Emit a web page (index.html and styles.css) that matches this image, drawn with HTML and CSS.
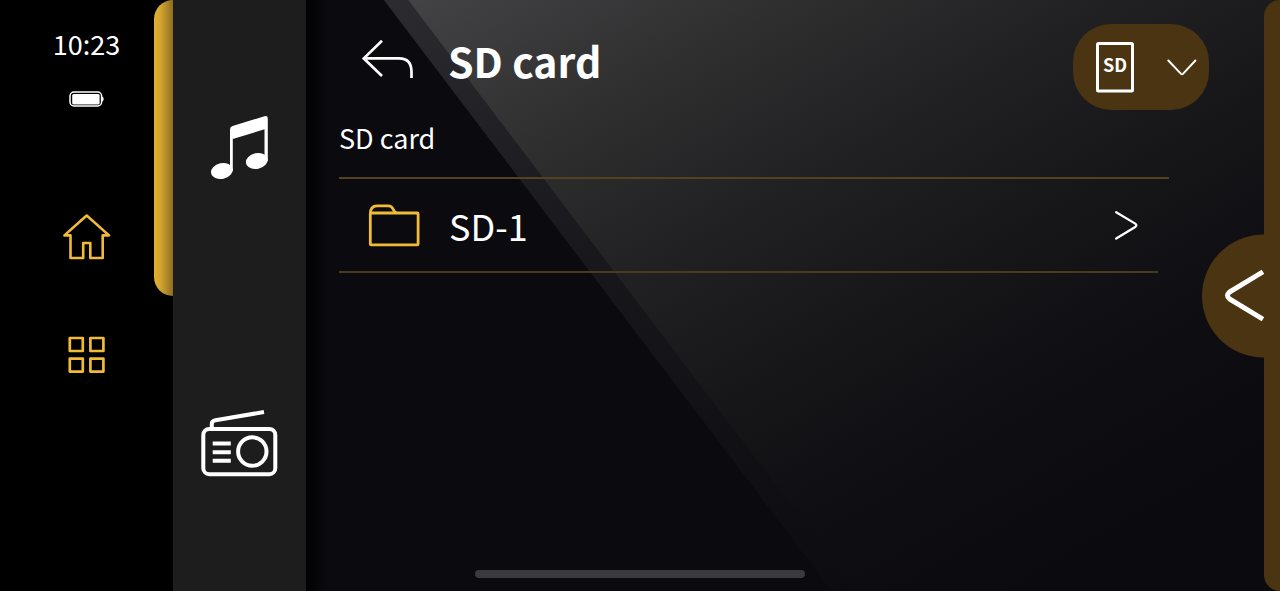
FILE: index.html
```html
<!DOCTYPE html>
<html lang="en">
<head>
  <meta charset="UTF-8" />
  <meta name="viewport" content="width=device-width, initial-scale=1.0" />
  <title>SD card</title>
  <link rel="stylesheet" href="styles.css">
</head>
<body>

  <!-- Status bar -->
  <aside class="status">
    <time class="time">10:23</time>
    <svg class="battery" width="36" height="18" viewBox="0 0 36 18" role="img" aria-label="Battery full">
      <rect x="1" y="2" width="31.6" height="14" rx="4" fill="none" stroke="#fff" stroke-width="1.5" />
      <rect x="3.2" y="4" width="27.4" height="10.4" rx="1.5" fill="#fff" />
      <path d="M33 6.5q1.7.2 1.7 2.5t-1.7 2.5z" fill="#fff" />
    </svg>
    <button class="icon-btn home" aria-label="Home">
      <svg width="50" height="48" viewBox="0 0 50 48" fill="none" stroke="#f1bb35" stroke-width="2.6" stroke-linejoin="round">
        <path d="M24.7 2.5 47 22.4H40.7V45H28.3V30H21.2V45H8.5V22.4H2.4Z" />
      </svg>
    </button>
    <button class="icon-btn apps" aria-label="Apps">
      <svg width="40" height="40" viewBox="0 0 40 40" fill="none" stroke="#f1bb35" stroke-width="2.7" stroke-linejoin="round">
        <rect x="2.8" y="3" width="13" height="13" />
        <rect x="23.4" y="3" width="13" height="13" />
        <rect x="2.8" y="23.6" width="13" height="13" />
        <rect x="23.4" y="23.6" width="13" height="13" />
      </svg>
    </button>
  </aside>

  <!-- Sources -->
  <nav class="sources">
    <button class="source active" aria-label="Music">
      <svg width="60" height="66" viewBox="0 0 60 66" fill="#fff">
        <path d="M20 14.5Q20 11.8 22.5 11L54.5 1.2Q57.8.4 57.8 3.5V46H54.5V14.3L22.8 24V56H20Z" />
        <ellipse cx="11.9" cy="56" rx="11" ry="7.8" transform="rotate(-12 11.9 56)" />
        <ellipse cx="46.8" cy="46" rx="11" ry="7.8" transform="rotate(-12 46.8 46)" />
      </svg>
    </button>
    <button class="source" aria-label="Radio">
      <svg width="78" height="70" viewBox="0 0 78 70" fill="none" stroke="#fff" stroke-width="4">
        <rect x="2.3" y="21" width="72" height="45.2" rx="6" />
        <path d="M10.8 20V16Q10.8 12.8 14.5 12.2L63 4" />
        <circle cx="51.3" cy="43.5" r="14.2" />
        <path d="M11.7 35.6H29.8M11.7 44.2H29.8M11.7 52.7H29.8" />
      </svg>
    </button>
  </nav>

  <!-- Browser -->
  <main class="browser">
    <header class="header">
      <button class="icon-btn back" aria-label="Back">
        <svg width="53" height="42" viewBox="0 0 53 42" fill="none" stroke="#fff" stroke-width="2.7">
          <path d="M21 2.7 2.8 20.4 21 38M2.8 20.4H38Q50.5 20.4 50.5 34V40" />
        </svg>
      </button>
      <h1 class="title">SD card</h1>
      <button class="device" aria-label="Select device" aria-haspopup="true">
        <svg width="40" height="52" viewBox="0 0 40 52">
          <rect x="2.5" y="2.5" width="35" height="47.6" rx="1" fill="none" stroke="#fff" stroke-width="3" />
          <text class="device-text" x="20" y="31" text-anchor="middle">SD</text>
        </svg>
        <svg width="32" height="20" viewBox="0 0 32 20" fill="none" stroke="#fff" stroke-width="2" stroke-linecap="round">
          <path d="M2.3 3.5 14.8 16.6Q16 17.8 17.2 16.6L29.4 3.5" />
        </svg>
      </button>
    </header>

    <h2 class="path">SD card</h2>

    <ul class="list">
      <li>
        <a class="row" href="#">
          <svg width="53" height="43" viewBox="0 0 53 43" fill="none" stroke="#f1bb35" stroke-width="2.8" stroke-linejoin="round">
            <rect x="2.3" y="9" width="47.8" height="31.8" rx=".8" />
            <path d="M2.3 10Q2.3 1.9 9 1.9H20.5Q23.5 1.9 25 5Q26.5 8.5 29 9" />
          </svg>
          <span class="name">SD-1</span>
          <svg width="26" height="32" viewBox="0 0 26 32" fill="none" stroke="#fff" stroke-width="2.3" stroke-linecap="round">
            <path d="M3.2 3.2 22.2 14.6Q24.5 16.3 22.2 18L3.2 29.6" />
          </svg>
        </a>
      </li>
    </ul>
  </main>

  <!-- Drawer -->
  <aside class="drawer">
    <button class="handle" aria-label="Open drawer">
      <svg width="40" height="52" viewBox="0 0 40 52" fill="none" stroke="#fff" stroke-width="5">
        <path d="M39 2.3 5.5 22.6Q1.5 26 5.5 29.4L39 49.7" />
      </svg>
    </button>
  </aside>

  <div class="home-bar"></div>

</body>
</html>
```
FILE: styles.css
```css
* {
  box-sizing: border-box;
}

body {
  font-family: 'Noto Sans CJK JP', 'Noto Sans', sans-serif;
  display: flex;
  min-height: 100vh;
  margin: 0;
  background: #0a0a0f;
  color: #fff;
  overflow: hidden;
}

button {
  font: inherit;
  color: inherit;
  border: none;
  padding: 0;
  background: none;
  cursor: pointer;
}

svg {
  display: block;
  flex: none;
}

/* Status bar */
.status {
  display: flex;
  flex-direction: column;
  align-items: center;
  flex: none;
  width: 173px;
  padding-top: 28px;
  background: #000;
}

.time {
  font-size: 27px;
  line-height: 32px;
}

.battery {
  margin-top: 30px;
}

.home {
  margin-top: 105px;
}

.apps {
  margin-top: 74px;
}

/* Sources */
.sources {
  position: relative;
  display: flex;
  flex-direction: column;
  flex: none;
  width: 133px;
  background: #1d1d1d;
}

.source {
  position: relative;
  display: flex;
  flex: 1;
  align-items: center;
  justify-content: center;
}

.source.active::before {
  content: "";
  position: absolute;
  top: 0;
  bottom: 0;
  right: 100%;
  width: 19px;
  border-radius: 19px 0 0 19px;
  background: linear-gradient(90deg, #e2b032, #d3a52f 35%, #8c6d22);
}

/* Browser */
.browser {
  position: relative;
  flex: 1;
  min-width: 0;
  padding: 24px 0 0 33px;
  background: linear-gradient(90deg, #020204, #0a0a0f 22px);
}

/* light falling across the glass */
.browser::before,
.browser::after {
  content: "";
  position: absolute;
  top: 0;
  bottom: 0;
  left: 0;
  right: -16px;
}

.browser::before {
  background: linear-gradient(150deg, #2c2c30 4%, #1d1d21 27%, #17171b 40%, #101015 60%, #0a0a0f 85%);
  clip-path: polygon(8% 0, 100% 0, 100% 100%, 54% 100%);
}

.browser::after {
  background: linear-gradient(150deg, #434345 5%, #2e2e2f 25%, #212123 40%, #171719 55%, #0f0e13 70%, #0a0a0f 88%);
  clip-path: polygon(10.5% 0, 100% 0, 100% 100%, 56.5% 100%);
}

.header,
.path,
.list {
  position: relative;
  z-index: 1;
}

.header {
  display: flex;
  align-items: flex-start;
  margin-right: 55px;
}

.back {
  margin: 14px 34px 0 22px;
}

.title {
  flex: 1;
  margin: 0;
  font-size: 41px;
  font-weight: bold;
  line-height: 72px;
}

.device {
  display: flex;
  align-items: center;
  justify-content: space-between;
  width: 136px;
  height: 86px;
  padding: 0 11px 0 22px;
  border-radius: 38px;
  background: #4a3412;
}

.device-text {
  font-size: 18px;
  font-weight: bold;
  fill: #fff;
}

.path {
  margin: 8px 0 19px;
  font-size: 27px;
  font-weight: normal;
  line-height: 40px;
}

.list {
  margin: 0 95px 0 0;
  padding: 0;
  list-style: none;
  border-top: 2px solid #54421f;
}

.row {
  display: flex;
  align-items: center;
  height: 94px;
  margin-right: 11px;
  padding: 0 19px 0 29px;
  border-bottom: 2px solid #4a3a1e;
  color: #fff;
  text-decoration: none;
}

.name {
  flex: 1;
  margin-left: 28px;
  font-size: 36px;
  line-height: 48px;
}

/* Drawer */
.drawer {
  position: relative;
  z-index: 2;
  flex: none;
  width: 16px;
  border-radius: 16px 0 0 16px;
  background: #4a3412;
}

.handle {
  position: absolute;
  top: 50%;
  right: 0;
  width: 78px;
  height: 123px;
  padding-left: 22px;
  border-radius: 62px 0 0 62px;
  background: #4a3412;
  transform: translateY(-50%);
}

.home-bar {
  position: absolute;
  z-index: 3;
  bottom: 13px;
  left: 50%;
  width: 330px;
  height: 8px;
  border-radius: 4px;
  background: #3b3a3f;
  transform: translateX(-50%);
}
```
